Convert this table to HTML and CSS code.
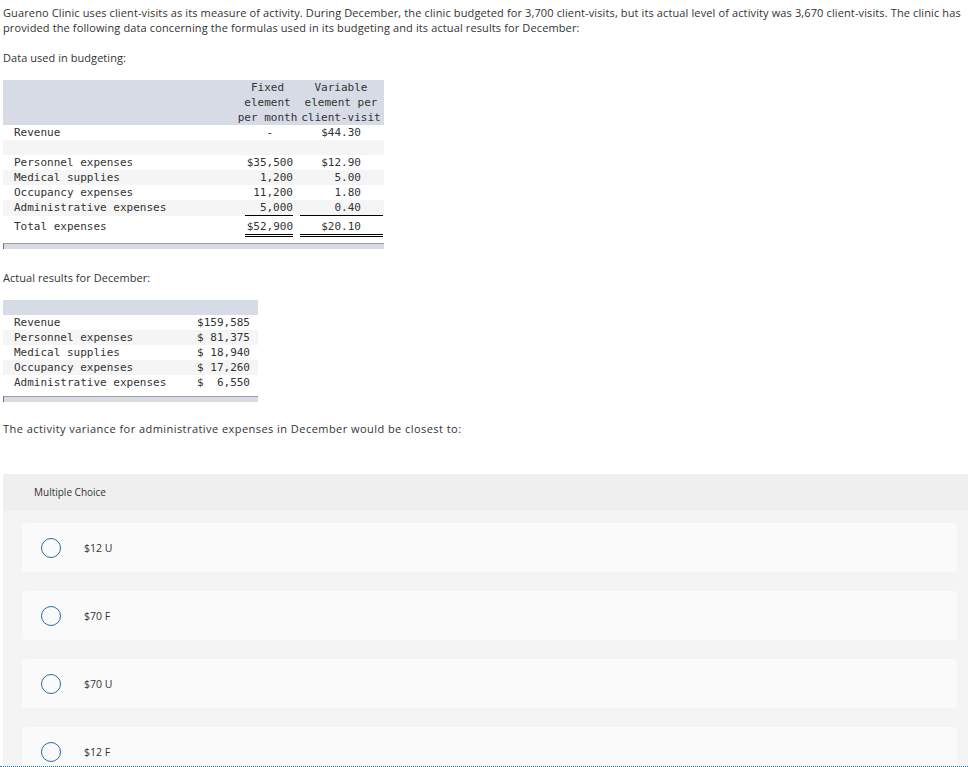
FILE: index.html
```html
<!DOCTYPE html>
<html lang="en">
<head>
<meta charset="utf-8">
<title>Guareno Clinic</title>
<link rel="stylesheet" href="styles.css">
</head>
<body>
<div class="page">
  <p class="intro">Guareno Clinic uses client-visits as its measure of activity. During December, the clinic budgeted for 3,700 client-visits, but its actual level of activity was 3,670 client-visits. The clinic has provided the following data concerning the formulas used in its budgeting and its actual results for December:</p>
  <p class="label">Data used in budgeting:</p>

  <div class="tbl-wrap t1-wrap">
    <table class="data t1">
      <thead>
        <tr>
          <th class="lbl"></th>
          <th class="fx">Fixed<br>element<br>per month</th>
          <th class="vr">Variable<br>element per<br>client-visit</th>
        </tr>
      </thead>
      <tbody>
        <tr><td class="lbl">Revenue</td><td class="fx"><div class="v">-&nbsp;&nbsp;&nbsp;</div></td><td class="vr"><div class="v">$44.30</div></td></tr>
        <tr><td class="lbl">&nbsp;</td><td class="fx"></td><td class="vr"></td></tr>
        <tr><td class="lbl">Personnel expenses</td><td class="fx"><div class="v">$35,500</div></td><td class="vr"><div class="v">$12.90</div></td></tr>
        <tr><td class="lbl">Medical supplies</td><td class="fx"><div class="v">1,200</div></td><td class="vr"><div class="v">5.00</div></td></tr>
        <tr><td class="lbl">Occupancy expenses</td><td class="fx"><div class="v">11,200</div></td><td class="vr"><div class="v">1.80</div></td></tr>
        <tr><td class="lbl">Administrative expenses</td><td class="fx"><div class="v under">5,000</div></td><td class="vr"><div class="v under">0.40</div></td></tr>
        <tr class="total"><td class="lbl">Total expenses</td><td class="fx"><div class="v dbl">$52,900</div></td><td class="vr"><div class="v dbl">$20.10</div></td></tr>
      </tbody>
    </table>
    <div class="bar"></div>
  </div>

  <p class="label actual">Actual results for December:</p>

  <div class="tbl-wrap t2-wrap">
    <table class="data t2">
      <thead>
        <tr><th class="lbl"></th><th class="val"></th></tr>
      </thead>
      <tbody>
        <tr><td class="lbl">Revenue</td><td class="val">$159,585</td></tr>
        <tr><td class="lbl">Personnel expenses</td><td class="val">$ 81,375</td></tr>
        <tr><td class="lbl">Medical supplies</td><td class="val">$ 18,940</td></tr>
        <tr><td class="lbl">Occupancy expenses</td><td class="val">$ 17,260</td></tr>
        <tr><td class="lbl">Administrative expenses</td><td class="val">$  6,550</td></tr>
      </tbody>
    </table>
    <div class="bar"></div>
  </div>

  <p class="question">The activity variance for administrative expenses in December would be closest to:</p>

  <section class="mc">
    <div class="mc-head">Multiple Choice</div>
    <div class="mc-body">
      <div class="opt"><span class="radio"></span><span class="opt-text">$12 U</span></div>
      <div class="opt"><span class="radio"></span><span class="opt-text">$70 F</span></div>
      <div class="opt"><span class="radio"></span><span class="opt-text">$70 U</span></div>
      <div class="opt"><span class="radio"></span><span class="opt-text">$12 F</span></div>
    </div>
  </section>
</div>
<div class="focus-line"></div>
</body>
</html>
```
FILE: styles.css
```css
html, body {
  margin: 0;
  padding: 0;
  background: #fff;
}
body {
  font-family: "Open Sans", "Liberation Sans", sans-serif;
  font-size: 11px;
  color: #333;
  overflow: hidden;
}
.page {
  padding: 5px 0 0 3px;
}
p {
  margin: 0;
  line-height: 15px;
}
.intro {
  padding-right: 4px;
  letter-spacing: 0.12px;
}
.label {
  margin-top: 15px;
  letter-spacing: 0.05px;
}
.tbl-wrap {
  margin-top: 15px;
}
.data {
  border-collapse: collapse;
  border-spacing: 0;
  font-family: "DejaVu Sans Mono", "Liberation Mono", monospace;
  font-size: 11px;
  line-height: 15px;
  color: #333;
}
.data th, .data td {
  padding: 0;
  font-weight: normal;
  vertical-align: top;
}
.data thead tr {
  background: #d6dbe5;
}
.data tbody tr:nth-child(even) {
  background: #f5f5f5;
}
.data .lbl {
  text-align: left;
  padding-left: 11px;
}
.t1 {
  width: 381px;
}
.t1 .lbl { width: 223px; }
.t1 th.fx { width: 61px; text-align: center; }
.t1 th.vr { width: 86px; text-align: center; }
.t1 td.fx {
  padding: 0 5px 0 8px;
}
.t1 td.vr {
  padding: 0 1px 0 2px;
}
.t1 td .v {
  text-align: right;
}
.t1 td.vr .v {
  padding-right: 22px;
}
.t1 .under {
  border-bottom: 1px solid #000;
}
.t1 .total .lbl {
  padding-top: 3px;
}
.t1 .dbl {
  padding-top: 3px;
  border-bottom: 3px double #000;
}
.t2 {
  width: 255px;
}
.t2 .lbl { width: 176px; }
.t2 thead tr { height: 15px; }
.t2 .val {
  text-align: right;
  padding-right: 8px;
  white-space: pre;
}
.bar {
  margin-top: 6px;
  height: 5px;
  background: #d8dbe2;
  border-top: 1px solid #9a9da4;
  border-left: 1px solid #6d6f74;
}
.t1-wrap .bar { width: 380px; }
.t2-wrap .bar { width: 254px; }
.actual {
  margin-top: 21px;
}
.question {
  margin-top: 19px;
  letter-spacing: 0.45px;
}
.mc {
  margin-top: 38px;
}
.mc-head {
  background: #efefef;
  height: 37px;
  line-height: 37px;
  padding-left: 31px;
  font-size: 10px;
  color: #333;
}
.mc-body {
  background: #f4f4f4;
  padding: 12px 11px 12px 19px;
  display: flex;
  flex-direction: column;
  gap: 19px;
}
.opt {
  background: #fafafa;
  border-radius: 3px;
  height: 49px;
  display: flex;
  align-items: center;
  padding-left: 19px;
}
.radio {
  width: 18px;
  height: 18px;
  border: 1.5px solid #2d6aa3;
  border-radius: 50%;
  flex: none;
}
.opt-text {
  margin-left: 23px;
  font-size: 10.5px;
  color: #333;
}
.focus-line {
  position: fixed;
  left: 0;
  right: 0;
  bottom: 0;
  border-top: 1px dotted #2f6fc0;
}
```
